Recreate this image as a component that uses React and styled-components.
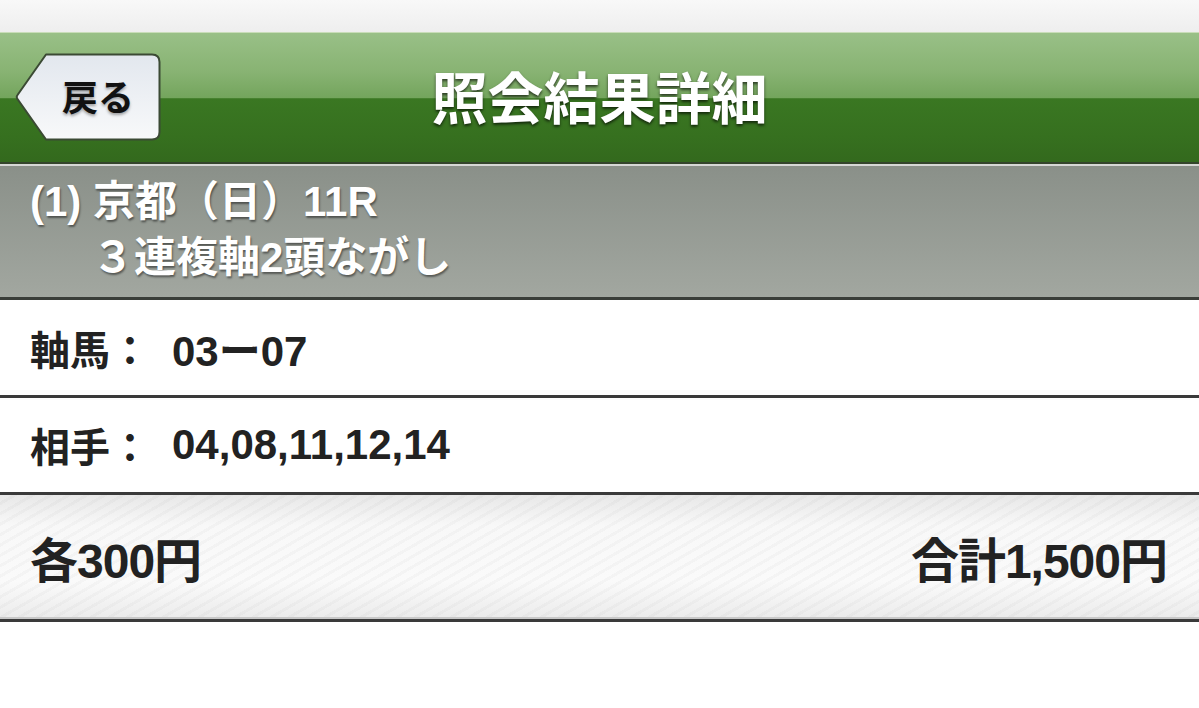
import React from 'react';
import styled, { createGlobalStyle } from 'styled-components';

const GlobalStyle = createGlobalStyle`
  html, body {
    margin: 0;
    padding: 0;
    background: #ffffff;
  }
  body {
    font-family: "Liberation Sans", "Noto Sans CJK JP", sans-serif;
    -webkit-font-smoothing: antialiased;
  }
`;

const Page = styled.div`
  width: 100%;
  display: flex;
  flex-direction: column;
`;

const StatusStrip = styled.div`
  height: 32px;
  background: linear-gradient(#f8f8f8, #eeeeee);
`;

const NavBar = styled.header`
  position: relative;
  height: 129px;
  display: flex;
  align-items: center;
  justify-content: center;
  border-top: 1px solid #c9ddb9;
  border-bottom: 2px solid #34452c;
  box-shadow: 0 2px 0 #d6d8d5;
  background: linear-gradient(
    #99c087 0%,
    #88b373 30%,
    #74a55d 50%,
    #3a7722 51%,
    #36701f 80%,
    #33691d 100%
  );
`;

const Title = styled.h1`
  margin: -6px 0 0 0;
  font-family: "Noto Sans CJK JP", sans-serif;
  font-weight: 700;
  font-size: 56px;
  line-height: 1;
  color: #ffffff;
  text-shadow: 0 2px 3px rgba(0, 0, 0, 0.65);
`;

const BackButton = styled.button`
  position: absolute;
  left: 15px;
  top: 20px;
  width: 146px;
  height: 88px;
  padding: 0 0 0 20px;
  border: none;
  background: none;
  display: flex;
  align-items: center;
  justify-content: center;
  cursor: pointer;
`;

const BackShape = styled.svg`
  position: absolute;
  inset: 0;
  width: 100%;
  height: 100%;
`;

const BackLabel = styled.span`
  position: relative;
  font-family: "Noto Sans CJK JP", sans-serif;
  font-weight: 700;
  font-size: 36px;
  color: #111;
  margin-top: -4px;
  text-shadow: 0 2px 3px rgba(0, 0, 0, 0.35);
`;

const RaceBand = styled.section`
  margin-top: 2px;
  padding: 8px 0 11px 30px;
  background: linear-gradient(#8a9089, #a2a7a0);
  border-bottom: 3px solid #3a3e39;
  color: #ffffff;
  font-family: "Liberation Sans", "Noto Sans CJK JP", sans-serif;
  font-weight: 700;
  font-size: 42px;
  line-height: 56px;
  text-shadow: 1px 2px 2px rgba(0, 0, 0, 0.45);
`;

const RaceLine = styled.div`
  padding-left: ${(p) => p.$indent || 0}px;
  white-space: nowrap;
`;

const InfoRow = styled.div`
  height: ${(p) => p.$h}px;
  display: flex;
  align-items: center;
  padding-left: 30px;
  background: #ffffff;
  border-bottom: 3px solid #3a3a3a;
  color: #222;
  font-weight: 700;
  font-size: 40px;
`;

const Label = styled.span`
  font-family: "Noto Sans CJK JP", sans-serif;
`;

const Value = styled.span`
  margin-left: 22px;
  font-family: "Liberation Sans", "Noto Sans CJK JP", sans-serif;
  font-size: 42px;
`;

const SummaryRow = styled.div`
  height: 124px;
  display: flex;
  align-items: center;
  justify-content: space-between;
  padding: 0 32px 0 30px;
  border-bottom: 3px solid #3a3a3a;
  box-shadow: inset 0 -2px 0 #c8c8c8;
  background:
    repeating-linear-gradient(
      150deg,
      rgba(255, 255, 255, 0) 0px,
      rgba(255, 255, 255, 0) 6px,
      rgba(0, 0, 0, 0.022) 6px,
      rgba(0, 0, 0, 0.022) 9px
    ),
    linear-gradient(#e8e8e8 0%, #f8f8f8 25%, #fafafa 70%, #ebebeb 100%);
  color: #222;
  font-weight: 700;
  font-size: 48px;
`;

const Amount = styled.span`
  font-family: "Liberation Sans", "Noto Sans CJK JP", sans-serif;
  letter-spacing: -1px;
`;

function BackArrow() {
  return (
    <BackShape viewBox="0 0 146 88" aria-hidden="true">
      <defs>
        <linearGradient id="backFill" x1="0" y1="0" x2="0" y2="1">
          <stop offset="0" stopColor="#e2e7ee" />
          <stop offset="0.5" stopColor="#edf0f4" />
          <stop offset="1" stopColor="#f8f9fa" />
        </linearGradient>
      </defs>
      <path
        d="M31 1.5 L137 1.5 Q144.5 1.5 144.5 9 L144.5 79 Q144.5 86.5 137 86.5 L31 86.5 L2.5 46 Q1 44 2.5 42 Z"
        fill="url(#backFill)"
        stroke="#3b4a34"
        strokeWidth="2"
        strokeLinejoin="round"
      />
    </BackShape>
  );
}

export default function App() {
  return (
    <Page>
      <GlobalStyle />
      <StatusStrip />
      <NavBar>
        <BackButton type="button">
          <BackArrow />
          <BackLabel>戻る</BackLabel>
        </BackButton>
        <Title>照会結果詳細</Title>
      </NavBar>
      <RaceBand>
        <RaceLine>(1) 京都（日）11R</RaceLine>
        <RaceLine $indent={62}>３連複軸2頭ながし</RaceLine>
      </RaceBand>
      <InfoRow $h={95}>
        <Label>軸馬：</Label>
        <Value>03ー07</Value>
      </InfoRow>
      <InfoRow $h={94}>
        <Label>相手：</Label>
        <Value>04,08,11,12,14</Value>
      </InfoRow>
      <SummaryRow>
        <Amount>各300円</Amount>
        <Amount>合計1,500円</Amount>
      </SummaryRow>
    </Page>
  );
}
